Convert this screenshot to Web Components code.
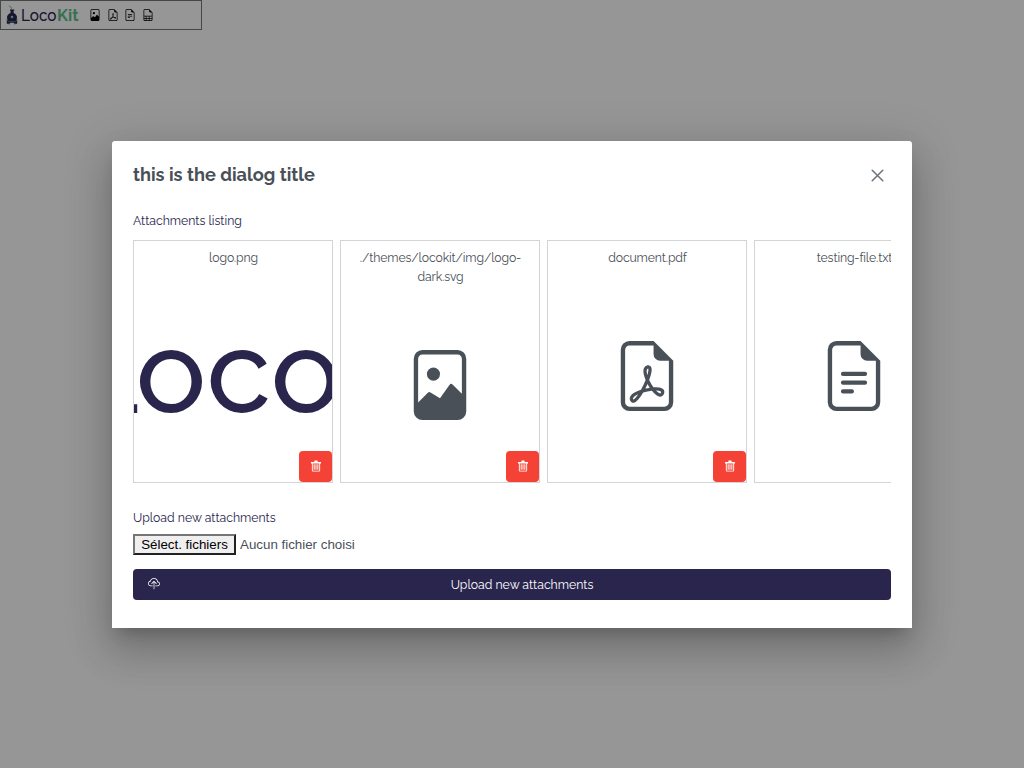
<!DOCTYPE html>
<html lang="fr">
<head>
<meta charset="utf-8">
<title>LocoKit</title>
<style>
html,body{margin:0;height:100%;overflow:hidden;background:#fafafa}
body{font-family:Raleway,Lato,sans-serif;font-size:12.25px;color:#495057}
</style>
</head>
<body>
<lk-app></lk-app>
<script>
const PAGE='<path d="M14 14V4.5L9.5 0H4a2 2 0 0 0-2 2v12a2 2 0 0 0 2 2h8a2 2 0 0 0 2-2zM9.5 3A1.5 1.5 0 0 0 11 4.5h2V14a1 1 0 0 1-1 1H4a1 1 0 0 1-1-1V2a1 1 0 0 1 1-1h5.5v2z"/>';
const ICONS={
image:'<path d="M8.002 5.5a1.5 1.5 0 1 1-3 0 1.5 1.5 0 0 1 3 0z"/><path d="M12 0H4a2 2 0 0 0-2 2v12a2 2 0 0 0 2 2h8a2 2 0 0 0 2-2V2a2 2 0 0 0-2-2zM3 2a1 1 0 0 1 1-1h8a1 1 0 0 1 1 1v8l-2.083-2.083a.5.5 0 0 0-.76.063L8 11 5.835 9.7a.5.5 0 0 0-.611.076L3 12V2z"/>',
pdf:PAGE+'<path d="M4.603 14.087a.81.81 0 0 1-.438-.42c-.195-.388-.13-.776.08-1.102.198-.307.526-.568.897-.787a7.68 7.68 0 0 1 1.482-.645 19.697 19.697 0 0 0 1.062-2.227 7.269 7.269 0 0 1-.43-1.295c-.086-.4-.119-.796-.046-1.136.075-.354.274-.672.65-.823.192-.077.4-.12.602-.077a.7.7 0 0 1 .477.365c.088.164.12.356.127.538.007.188-.012.396-.047.614-.084.51-.27 1.134-.52 1.794a10.954 10.954 0 0 0 .98 1.686 5.753 5.753 0 0 1 1.334.05c.364.066.734.195.96.465.12.144.193.32.2.518.007.192-.047.382-.138.563a1.04 1.04 0 0 1-.354.416.856.856 0 0 1-.51.138c-.331-.014-.654-.196-.933-.417a5.712 5.712 0 0 1-.911-.95 11.651 11.651 0 0 0-1.997.406 11.307 11.307 0 0 1-1.02 1.51c-.292.35-.609.656-.927.787a.793.793 0 0 1-.58.029zm1.379-1.901c-.166.076-.32.156-.459.238-.328.194-.541.383-.647.547-.094.145-.096.25-.04.361.01.022.02.036.026.044a.266.266 0 0 0 .035-.012c.137-.056.355-.235.635-.572a8.18 8.18 0 0 0 .45-.606zm1.64-1.33a12.71 12.71 0 0 1 1.01-.193 11.744 11.744 0 0 1-.51-.858 20.801 20.801 0 0 1-.5 1.05zm2.446.45c.15.163.296.3.435.41.24.19.407.253.498.256a.107.107 0 0 0 .07-.015.307.307 0 0 0 .094-.125.436.436 0 0 0 .059-.2.095.095 0 0 0-.026-.063c-.052-.062-.2-.152-.518-.209a3.876 3.876 0 0 0-.612-.053zM8.078 7.8a6.7 6.7 0 0 0 .2-.828c.031-.188.043-.343.038-.465a.613.613 0 0 0-.032-.198.517.517 0 0 0-.145.04c-.087.035-.158.106-.196.283-.04.192-.03.469.046.822.024.111.054.227.09.346z"/>',
text:PAGE+'<path d="M5.5 7a.5.5 0 0 0 0 1h5a.5.5 0 0 0 0-1h-5zM5 9.5a.5.5 0 0 1 .5-.5h5a.5.5 0 0 1 0 1h-5a.5.5 0 0 1-.5-.5zm0 2a.5.5 0 0 1 .5-.5h2a.5.5 0 0 1 0 1h-2a.5.5 0 0 1-.5-.5z"/>',
sheet:'<path d="M14 14V4.5L9.5 0H4a2 2 0 0 0-2 2v12a2 2 0 0 0 2 2h8a2 2 0 0 0 2-2zM9.5 3A1.5 1.5 0 0 0 11 4.5h2V9H3V2a1 1 0 0 1 1-1h5.5v2zM3 12v-2h2v2H3zm0 1h2v2H4a1 1 0 0 1-1-1v-1zm3 2v-2h3v2H6zm4 0v-2h3v1a1 1 0 0 1-1 1h-2zm3-3h-3v-2h3v2zm-7 0v-2h3v2H6z"/>',
upload:'<path d="M4.406 1.342A5.53 5.53 0 0 1 8 0c2.69 0 4.923 2 5.166 4.579C14.758 4.804 16 6.137 16 7.773 16 9.569 14.502 11 12.687 11H10a.5.5 0 0 1 0-1h2.688C13.979 10 15 8.988 15 7.773c0-1.216-1.02-2.228-2.313-2.228h-.5v-.5C12.188 2.825 10.328 1 8 1a4.53 4.53 0 0 0-2.941 1.1c-.757.652-1.153 1.438-1.153 2.055v.448l-.445.049C2.064 4.805 1 5.952 1 7.318 1 8.785 2.23 10 3.781 10H6a.5.5 0 0 1 0 1H3.781C1.708 11 0 9.366 0 7.318c0-1.763 1.266-3.223 2.942-3.593.143-.863.698-1.723 1.464-2.383z"/><path d="M7.646 4.146a.5.5 0 0 1 .708 0l3 3a.5.5 0 0 1-.708.708L8.5 5.707V14.5a.5.5 0 0 1-1 0V5.707L5.354 7.854a.5.5 0 1 1-.708-.708l3-3z"/>',
trash:'<path fill-rule="evenodd" d="M1.300 2.500h4.500V1.300Q5.800 .6 6.600 .6h2.800q.8 0 .8.700V2.500h4.500v2.300h-1.200V14q0 1.300-1.300 1.300H3.800Q2.500 15.300 2.500 14V4.800H1.300zM3.700 4.800V14.200h8.600V4.800z"/><path d="M4.900 5.800h1.300v7.300H4.900zM7.350 5.800h1.300v7.300h-1.300zM9.800 5.800h1.300v7.300H9.800z"/>',
close:'<path d="M1.500 1.500l13 13m0-13l-13 13" fill="none" stroke="currentColor" stroke-width="1.900" stroke-linecap="round"/>'
};
function define(name,html){
  customElements.define(name,class extends HTMLElement{
    constructor(){super();this.attachShadow({mode:'open'}).innerHTML=html;}
  });
}
customElements.define('lk-icon',class extends HTMLElement{
  connectedCallback(){
    if(!this.shadowRoot)this.attachShadow({mode:'open'});
    const s=this.getAttribute('size');
    this.shadowRoot.innerHTML=`<style>:host{display:block;flex:none;width:${s}px;height:${s}px}svg{display:block}</style><svg width="${s}" height="${s}" viewBox="0 0 16 16" fill="currentColor">${ICONS[this.getAttribute('name')]}</svg>`;
  }
});
define('lk-logo',`<style>:host{display:block;width:74px;height:20px}svg{display:block}text{font-family:Raleway,Lato,sans-serif;font-size:16.500px;font-weight:500}</style>
<svg width="74" height="20" viewBox="0 0 74 20">
<path d="M5.500 3.800Q6 2.300 4.600 2T3.200.6" stroke="#62ba8b" fill="none"/>
<path d="M4 4.500h4.200v1.200h-.6v2.300Q11 9.500 11 12.500q0 2.500-1.500 4h-7Q1 15 1 12.500 1 9.500 4.600 8V5.700H4z" fill="#29254d"/>
<circle cx="6" cy="12" r="1.300" fill="#aeb7c6"/>
<path d="M.8 15.300q5.300 2 10.400 0v3.500H8.800l-1-1H4.200l-1 1H.8z" fill="#29254d"/>
<path d="M.8 14.500l1.400 2h7.600l1.400-2M2.500 18.800h1.700m3.600 0h1.700" stroke="#397e70" stroke-width=".9" fill="none"/>
<text x="15" y="15.700" fill="#29254d" textLength="35.500" lengthAdjust="spacingAndGlyphs">Loco</text>
<text x="51" y="15.700" fill="#62ba8b" style="font-weight:700" textLength="21.500" lengthAdjust="spacingAndGlyphs">Kit</text>
</svg>`);
define('lk-toolbar',`<style>:host{display:flex;align-items:center;box-sizing:border-box;width:202px;height:30px;border:1px solid #767676;padding:0 5px;color:#000}
.i{display:flex;gap:5.650px;margin-left:9px}</style>
<lk-logo></lk-logo><div class="i"><lk-icon name="image" size="12"></lk-icon><lk-icon name="pdf" size="12"></lk-icon><lk-icon name="text" size="12"></lk-icon><lk-icon name="sheet" size="12"></lk-icon></div>`);
define('lk-card',`<style>:host{display:flex;flex-direction:column;position:relative;box-sizing:border-box;flex:none;width:200px;height:243px;border:1px solid #d3d4d5;padding-top:7px;overflow:hidden}
.name{text-align:center;line-height:19px;letter-spacing:-.13px;padding-left:1px}
.pic{flex:1;min-height:0;display:flex;align-items:center;justify-content:center;padding-top:2px}
.del{position:absolute;right:0;bottom:0;box-sizing:border-box;width:33px;height:31px;padding-bottom:1px;border-radius:4px;background:#f44336;color:#fff;display:flex;align-items:center;justify-content:center}
</style><div class="name"><slot name="name"></slot></div><div class="pic"><slot></slot></div><div class="del"><lk-icon name="trash" size="12"></lk-icon></div>`);
define('lk-preview',`<style>:host{display:block;width:198px;height:100px;flex:none}svg{display:block;overflow:hidden}text{font-family:Raleway,Lato,sans-serif;font-size:88.500px;font-weight:650;fill:#29254d}</style>
<svg width="198" height="100"><text y="87" transform="scale(1.03 1)"><tspan x="-47.500">L</tspan><tspan x="2.600">O</tspan><tspan x="71.300">C</tspan><tspan x="133.700">O</tspan></text></svg>`);
define('lk-file-input',`<style>:host{display:flex;align-items:center;height:21px;gap:4px;font:13.333px "Liberation Sans",Arial,sans-serif}
span{box-sizing:border-box;width:103px;height:21px;line-height:17px;text-align:center;color:#000;background:#efefef;border:2px solid;border-color:#767676 #212121 #212121 #767676;white-space:nowrap}</style><span>Sélect. fichiers</span><div>Aucun fichier choisi</div>`);
define('lk-button',`<style>:host{display:flex;align-items:center;box-sizing:border-box;height:31px;background:#29254d;color:#fff;border-radius:4px;padding:0 15px}
.l{flex:1;text-align:center;margin-left:8px}lk-icon{margin-top:-1px}</style><lk-icon name="upload" size="12"></lk-icon><div class="l"><slot></slot></div>`);
define('lk-dialog',`<style>:host{display:block;box-sizing:border-box;width:800px;height:487px;margin-top:1px;background:#fff;border-radius:3px 3px 0 0;padding:20px 21px;box-shadow:0 11px 15px -7px rgba(0,0,0,.2),0 24px 38px 3px rgba(0,0,0,.14),0 9px 46px 8px rgba(0,0,0,.12)}
header{display:flex;justify-content:space-between;align-items:center;height:28px;padding-right:7px}
lk-icon{color:#6c757d}
h1{margin:0;font-size:18.200px;line-height:26px;font-weight:700}</style>
<header><h1><slot name="title"></slot></h1><lk-icon name="close" size="13"></lk-icon></header><slot></slot>`);
define('lk-app',`<style>:host{display:block;position:relative;height:768px}
.mask{position:absolute;inset:0;background:rgba(0,0,0,.4);display:flex;align-items:center;justify-content:center}
.label{color:#29254d;line-height:19px;font-weight:450}
.first{margin-top:22px}.list{display:flex;gap:7px;overflow:hidden;margin-top:10px}
.up{margin-top:25px}lk-file-input{margin-top:7px}lk-button{margin-top:14px}
</style><lk-toolbar></lk-toolbar><div class="mask"><lk-dialog><span slot="title">this is the dialog title</span>
<div class="label first">Attachments listing</div>
<div class="list"><lk-card><span slot="name">logo.png</span><lk-preview></lk-preview></lk-card>
<lk-card><span slot="name">./themes/locokit/img/logo-<br>dark.svg</span><lk-icon name="image" size="70"></lk-icon></lk-card>
<lk-card><span slot="name">document.pdf</span><lk-icon name="pdf" size="70"></lk-icon></lk-card>
<lk-card><span slot="name">testing-file.txt</span><lk-icon name="text" size="70"></lk-icon></lk-card></div>
<div class="label up">Upload new attachments</div>
<lk-file-input></lk-file-input><lk-button>Upload new attachments</lk-button>
</lk-dialog></div>`);
</script>
</body>
</html>
